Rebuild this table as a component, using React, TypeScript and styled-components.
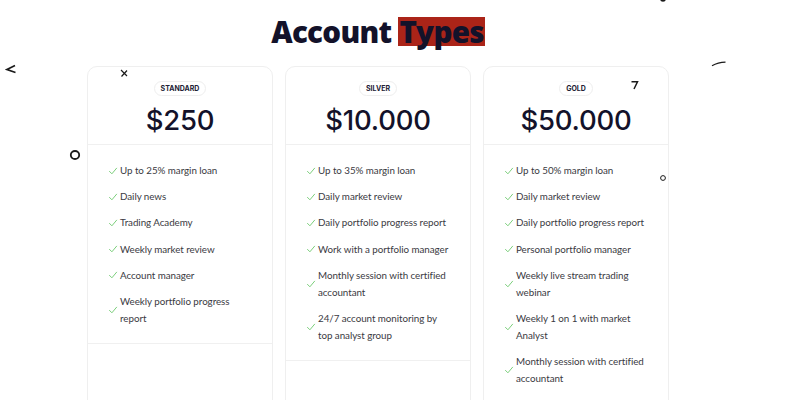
import React, {FC} from 'react';
import styled, {createGlobalStyle} from "styled-components";

type PlanType = {
    name: string
    price: string
    features: string[]
}

const plans: PlanType[] = [
    {
        name: 'Standard',
        price: '$250',
        features: [
            'Up to 25% margin loan',
            'Daily news',
            'Trading Academy',
            'Weekly market review',
            'Account manager',
            'Weekly portfolio progress report',
        ]
    },
    {
        name: 'Silver',
        price: '$10.000',
        features: [
            'Up to 35% margin loan',
            'Daily market review',
            'Daily portfolio progress report',
            'Work with a portfolio manager',
            'Monthly session with certified accountant',
            '24/7 account monitoring by top analyst group',
        ]
    },
    {
        name: 'Gold',
        price: '$50.000',
        features: [
            'Up to 50% margin loan',
            'Daily market review',
            'Daily portfolio progress report',
            'Personal portfolio manager',
            'Weekly live stream trading webinar',
            'Weekly 1 on 1 with market Analyst',
            'Monthly session with certified accountant',
        ]
    },
]

const GlobalStyle = createGlobalStyle`
  body {
    margin: 0;
    background: #fff;
    font-family: Lato, "Open Sans", sans-serif;
  }
`

export default function App() {
    return (
        <Page>
            <GlobalStyle/>
            <Scribbles/>
            <Container>
                <Title>Account <Mark>Types</Mark></Title>
                <Cards>
                    {plans.map(p => <PlanCard key={p.name} plan={p}/>)}
                </Cards>
            </Container>
        </Page>
    );
}

const PlanCard: FC<{ plan: PlanType }> = ({plan}) => {
    return (
        <Card>
            <CardHead>
                <Badge>{plan.name}</Badge>
                <Price>{plan.price}</Price>
            </CardHead>
            <FeatureList>
                {plan.features.map(f => (
                    <Feature key={f}>
                        <Check viewBox="0 0 10 10">
                            <path d="M1.5 5.4 L3.9 7.8 L8.6 2.2" fill="none" stroke="#7ccf7c" strokeWidth="1"
                                  strokeLinecap="round"/>
                        </Check>
                        <span>{f}</span>
                    </Feature>
                ))}
            </FeatureList>
            <CardFoot/>
        </Card>
    )
}

// little hand-drawn marks scattered over the page
const Scribbles = () => (
    <>
        <Doodle style={{left: 5, top: 64}} width="12" height="10" viewBox="0 0 12 10">
            <path d="M10 1.5 L2 5.5 L10.5 8.5" fill="none" stroke="#1a1a1a" strokeWidth="1.6"/>
        </Doodle>
        <Doodle style={{left: 119, top: 68}} width="10" height="10" viewBox="0 0 10 10">
            <path d="M2 2 L8 8 M8 2.5 L2.5 8.5" fill="none" stroke="#1a1a1a" strokeWidth="1.2"/>
        </Doodle>
        <Doodle style={{left: 69, top: 149}} width="12" height="12" viewBox="0 0 12 12">
            <ellipse cx="6" cy="6" rx="4.2" ry="4" fill="none" stroke="#1a1a1a" strokeWidth="1.8"/>
        </Doodle>
        <Doodle style={{left: 630, top: 80}} width="9" height="10" viewBox="0 0 9 10">
            <path d="M1.5 1.8 L7.5 1.8 L4 9" fill="none" stroke="#1a1a1a" strokeWidth="1.5"/>
        </Doodle>
        <Doodle style={{left: 711, top: 60}} width="16" height="8" viewBox="0 0 16 8">
            <path d="M1 5.8 Q7 2.4 14.5 2.2" fill="none" stroke="#1a1a1a" strokeWidth="1.2"/>
        </Doodle>
        <Doodle style={{left: 659, top: 174}} width="8" height="8" viewBox="0 0 8 8">
            <circle cx="4" cy="4" r="2.4" fill="none" stroke="#1a1a1a" strokeWidth="1"/>
        </Doodle>
        <Doodle style={{left: 659, top: -3}} width="8" height="6" viewBox="0 0 8 6">
            <ellipse cx="4" cy="2.5" rx="2.8" ry="2.2" fill="#1a1a1a"/>
        </Doodle>
    </>
)

const Page = styled.div`
  position: relative;
  height: 400px;
  overflow: hidden;
`

const Doodle = styled.svg`
  position: absolute;
  pointer-events: none;
`

const Container = styled.div`
  width: 582px;
  margin-left: 87px;
  display: flex;
  flex-direction: column;
  align-items: center;
  padding-top: 12px;
`

const Title = styled.h2`
  margin: 0;
  font-family: "Open Sans", Inter, sans-serif;
  font-weight: 800;
  font-size: 29.5px;
  line-height: 40px;
  letter-spacing: -0.7px;
  color: #13122a;
`

const Mark = styled.span`
  display: inline-block;
  background: #ab2418;
  padding: 0 1px;
  line-height: 29px;
`

const Cards = styled.div`
  margin-top: 14px;
  align-self: stretch;
  display: grid;
  grid-template-columns: repeat(3, 186px);
  justify-content: space-between;
  align-items: start;
`

const Card = styled.div`
  border: 1px solid #efefef;
  border-radius: 10px;
  background: #fff;
  display: flex;
  flex-direction: column;
`

const CardHead = styled.div`
  height: 78px;
  display: flex;
  flex-direction: column;
  align-items: center;
  padding-top: 14px;
  box-sizing: border-box;
  border-bottom: 1px solid #f0f0f0;
`

const Badge = styled.div`
  font-family: Inter, sans-serif;
  font-size: 7px;
  font-weight: 700;
  text-transform: uppercase;
  color: #222235;
  border: 1px solid #eeeeee;
  border-radius: 8px;
  padding: 2px 6px;
  line-height: 9px;
`

const Price = styled.div`
  font-family: Inter, sans-serif;
  font-size: 27.5px;
  font-weight: 500;
  color: #13122a;
  line-height: 36px;
  margin-top: 6px;
  letter-spacing: -0.2px;
`

const FeatureList = styled.ul`
  list-style: none;
  margin: 0;
  padding: 17px 20px 16px 20px;
  display: flex;
  flex-direction: column;
  gap: 9.2px;
  border-bottom: 1px solid #f0f0f0;
`

const Feature = styled.li`
  display: flex;
  align-items: center;
  gap: 2px;
  font-size: 9.8px;
  line-height: 17px;
  letter-spacing: -0.05px;
  color: #3a3a42;

  span {
    max-width: 136px;
  }
`

const Check = styled.svg`
  width: 10px;
  height: 10px;
  flex-shrink: 0;
`

const CardFoot = styled.div`
  height: 80px;
`
